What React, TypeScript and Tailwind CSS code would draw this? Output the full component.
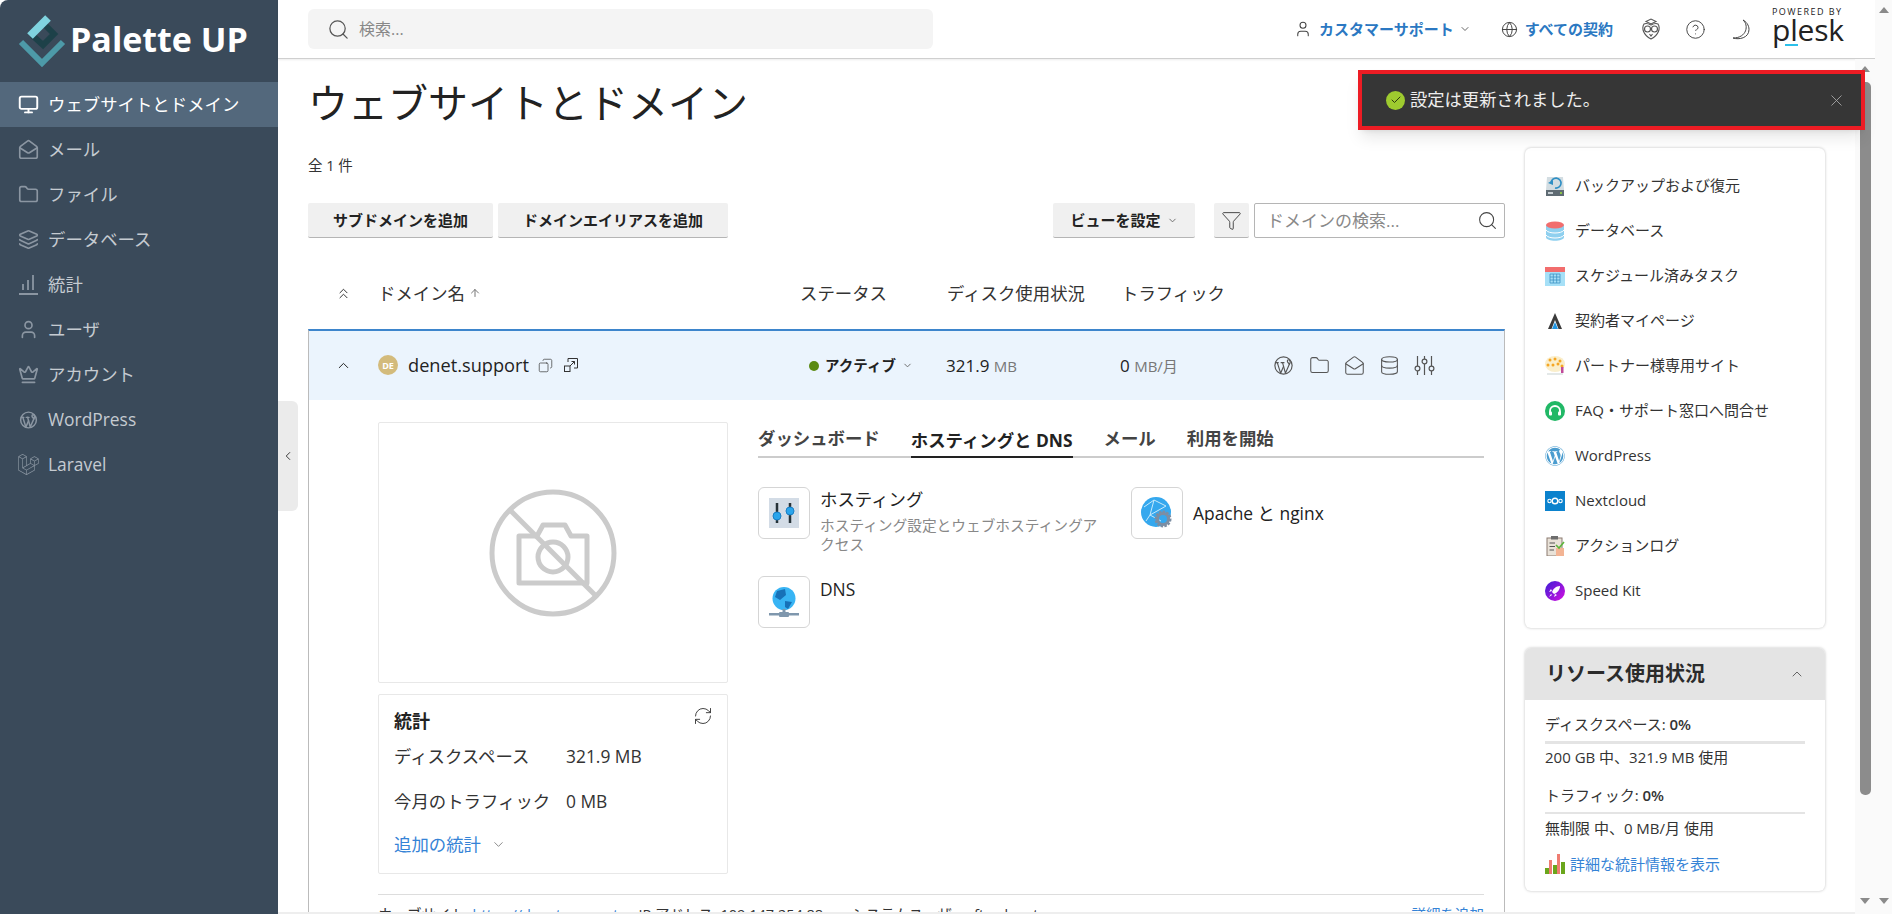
import { ReactNode } from 'react';
import {
  Monitor, MailOpen, Folder, Layers, User, Crown, ChevronLeft, ChevronDown, ChevronUp,
  ChevronsUp, Search, Globe, CircleHelp, Check, X, ArrowUp, Copy, Database,
  RefreshCw, Funnel,
} from 'lucide-react';
import { FaWordpress, FaLaravel } from 'react-icons/fa';
import { TbBrandWordpress } from 'react-icons/tb';

const ChartNav = () => (
  <svg width="21" height="21" viewBox="0 0 21 21" fill="none" stroke="currentColor" strokeWidth="1.8">
    <path d="M1 20 H20 M5 16 V10 M10 16 V6 M15 16 V1" />
  </svg>
);

const navItems = [
  { label: 'ウェブサイトとドメイン', icon: <Monitor size={23} strokeWidth={2.2} />, active: true },
  { label: 'メール', icon: <MailOpen size={23} strokeWidth={1.9} /> },
  { label: 'ファイル', icon: <Folder size={23} strokeWidth={1.9} /> },
  { label: 'データベース', icon: <Layers size={23} strokeWidth={1.9} /> },
  { label: '統計', icon: <ChartNav /> },
  { label: 'ユーザ', icon: <User size={23} strokeWidth={1.9} /> },
  { label: 'アカウント', icon: <Crown size={23} strokeWidth={1.9} /> },
  { label: 'WordPress', icon: <TbBrandWordpress size={24} strokeWidth={1.7} /> },
  { label: 'Laravel', icon: <FaLaravel size={21} /> },
];

const Logo = () => (
  <svg width="50" height="56" viewBox="0 0 50 56" className="shrink-0">
    <path d="M3 31 L24 52 L45 31" fill="none" stroke="#4d9aa8" strokeWidth="6" />
    <path d="M24 11 L36 23 L25 34 L14 24" fill="none" stroke="#1d4149" strokeWidth="6" />
    <path d="M12 25 L30 7" stroke="#7fd3df" strokeWidth="8" />
  </svg>
);

const Sidebar = () => (
  <aside className="w-[278px] shrink-0 bg-[#3a4a5a] rounded-tl-lg">
    <div className="h-[82px] flex items-center pl-[18px] pb-1">
      <Logo />
      <span className="ml-[2px] text-[34px] font-bold text-white">Palette UP</span>
    </div>
    {navItems.map(item => (
      <div
        key={item.label}
        className={`h-[45px] flex items-center pl-[18px] gap-[9px] text-[17.4px] ${
          item.active ? 'bg-[#53687c] text-white' : 'text-[#c5cbd1]'
        }`}
      >
        <span className={`w-[21px] flex justify-center ${item.active ? 'text-white' : 'text-[#8b96a2]'}`}>{item.icon}</span>
        <span>{item.label}</span>
      </div>
    ))}
  </aside>
);

const OwlIcon = () => (
  <svg width="20" height="22" viewBox="0 0 20 22" fill="none" stroke="#555" strokeWidth="1.1">
    <path d="M5 3.5 L10 1 L15 3.5 L10 6 Z" />
    <path d="M3 6 C5 5 8 6 10 7 C12 6 15 5 17 6 C19.5 10 18 17 10 21 C2 17 0.5 10 3 6 Z" />
    <circle cx="6.5" cy="11" r="3" />
    <circle cx="13.5" cy="11" r="3" />
    <path d="M8.5 16 L10 18 L11.5 16" />
  </svg>
);

const Crescent = () => (
  <svg width="18" height="21" viewBox="0 0 18 21" fill="none" stroke="#444" strokeWidth="1">
    <path d="M11 1 C17 6 15 19 1 19 C7 21 17 19 17 10.5 C17 6 14 2.5 11 1 Z" />
  </svg>
);

const TopBar = () => (
  <header className="h-[59px] shrink-0 flex items-center border-b border-[#cfcfcf] shadow-[0_1px_2px_rgba(0,0,0,0.08)] bg-white pl-[30px] pr-[31px]">
    <div className="w-[625px] h-[40px] bg-[#f4f4f4] rounded-md flex items-center pl-[19px] gap-[9px] text-[16px] text-[#888]">
      <Search size={23} strokeWidth={1.3} className="text-[#555]" />
      検索...
    </div>
    <div className="flex-1" />
    <div className="flex items-center text-[15px] font-bold text-[#2b78c2]">
      <User size={18} strokeWidth={1.4} className="text-[#444] mr-[7px]" />
      カスタマーサポート
      <ChevronDown size={12} className="text-[#666] ml-[5px]" />
      <Globe size={17} strokeWidth={1.4} className="text-[#444] ml-[30px] mr-[7px]" />
      すべての契約
    </div>
    <span className="ml-[28px] flex"><OwlIcon /></span>
    <CircleHelp size={21} strokeWidth={1.1} className="text-[#444] ml-[24px]" />
    <span className="ml-[26px] flex"><Crescent /></span>
    <div className="ml-[22px] w-[72px] flex flex-col items-start text-[#222] leading-none mb-[6px]">
      <span className="text-[9px] leading-[10px] tracking-[1.45px] whitespace-nowrap">POWERED BY</span>
      <span className="text-[30px] leading-[26px] tracking-[-0.2px] font-normal">plesk</span>
      <span className="w-[13px] h-[2px] bg-[#2cc0ea] ml-[13px] mt-[1px]" />
    </div>
  </header>
);

const Btn = ({ children, className = '' }: { children: ReactNode; className?: string }) => (
  <div className={`h-[35px] bg-[#f0f0f0] rounded-[2px] border-b border-[#b5b5b5] flex items-center justify-center text-[15px] font-bold text-[#222] whitespace-nowrap ${className}`}>
    {children}
  </div>
);

const Toolbar = () => (
  <div className="flex items-center mt-[27px]">
    <Btn className="w-[185px]">サブドメインを追加</Btn>
    <Btn className="w-[230px] ml-[5px]">ドメインエイリアスを追加</Btn>
    <div className="flex-1" />
    <Btn className="w-[142px] gap-[6px]">
      ビューを設定 <ChevronDown size={11} className="text-[#666]" />
    </Btn>
    <Btn className="w-[35px] ml-[19px]"><Funnel size={21} strokeWidth={1.1} className="text-[#444]" /></Btn>
    <div className="w-[251px] h-[35px] ml-[5px] border border-[#b5b5b5] rounded-[2px] flex items-center justify-between pl-[12px] pr-[6px] text-[17px] text-[#888]">
      ドメインの検索...
      <Search size={21} strokeWidth={1.2} className="text-[#444]" />
    </div>
  </div>
);

const TableHead = () => (
  <div className="flex items-center h-[48px] mt-[31px] mb-[12px] text-[17.4px] text-[#333]">
    <span className="w-[70px] flex justify-center"><ChevronsUp size={17} strokeWidth={1.4} /></span>
    <span className="w-[422px] flex items-center gap-[4px]">ドメイン名 <ArrowUp size={12} className="text-[#777]" /></span>
    <span className="w-[147px]">ステータス</span>
    <span className="w-[174px]">ディスク使用状況</span>
    <span>トラフィック</span>
  </div>
);

const SliderKnobs = () => (
  <svg width="21" height="21" viewBox="0 0 21 21" fill="none" stroke="#555" strokeWidth="1.2">
    <path d="M3.5 1 V11 M3.5 16 V20 M10.5 1 V4 M10.5 9 V20 M17.5 1 V11 M17.5 16 V20" />
    <circle cx="3.5" cy="13.5" r="2.4" />
    <circle cx="10.5" cy="6.5" r="2.4" />
    <circle cx="17.5" cy="13.5" r="2.4" />
  </svg>
);

const OpenLinkBox = () => (
  <svg width="16" height="16" viewBox="0 0 16 16" fill="none" stroke="#333" strokeWidth="1" className="ml-[10px]">
    <path d="M5 5 V1.5 H14.5 V11 H11" />
    <rect x="1.5" y="9" width="5.5" height="5.5" />
    <path d="M7 9 L11.5 4.5 M8.5 4.5 H11.5 V7.5" />
  </svg>
);

const DomainRow = () => (
  <div className="flex items-center h-[69px] bg-[#ebf4fd] text-[#222]">
    <span className="w-[70px] flex justify-center -ml-px"><ChevronUp size={17} strokeWidth={1.4} /></span>
    <span className="w-[421px] flex items-center">
      <span className="w-[20px] h-[20px] rounded-full bg-[#d3bb7c] text-white text-[9px] font-bold flex items-center justify-center">DE</span>
      <span className="ml-[10px] text-[18.2px] font-medium">denet.support</span>
      <Copy size={15} strokeWidth={1.1} className="ml-[9px] text-[#333] -scale-x-100" />
      <OpenLinkBox />
    </span>
    <span className="w-[147px] flex items-center pl-[10px] text-[14.5px] font-bold">
      <span className="w-[10px] h-[10px] rounded-full bg-[#5a8a12] mr-[6px]" />
      アクティブ
      <ChevronDown size={11} className="ml-[6px] text-[#666]" />
    </span>
    <span className="w-[174px] text-[17px]">321.9 <span className="text-[15px] text-[#777]">MB</span></span>
    <span className="w-[152px] text-[17px]">0 <span className="text-[15px] text-[#777]">MB/月</span></span>
    <span className="flex items-center gap-[14px] text-[#555]">
      <TbBrandWordpress size={23} strokeWidth={1.2} />
      <Folder size={21} strokeWidth={1.2} />
      <MailOpen size={21} strokeWidth={1.2} />
      <Database size={21} strokeWidth={1.2} />
      <SliderKnobs />
    </span>
  </div>
);

const NoPhoto = () => (
  <svg width="128" height="128" viewBox="0 0 128 128" fill="none" stroke="#cbcbcb" strokeWidth="5" strokeLinejoin="round">
    <circle cx="64" cy="64" r="61" />
    <path d="M21 21 L107 107" />
    <path d="M30 47 L48 47 L54 36 L76 36 L82 47 L98 47 L98 94 L30 94 Z" />
    <circle cx="64" cy="68" r="15" />
  </svg>
);

const HostingIcon = () => (
  <svg width="30" height="30" viewBox="0 0 30 30">
    <rect width="30" height="30" fill="#d3dce6" />
    <path d="M8 5 V25 M21 5 V25" stroke="#263238" strokeWidth="2.5" />
    <circle cx="8" cy="18" r="4" fill="#2aa5ec" stroke="#1a7fc5" />
    <circle cx="21" cy="13" r="4" fill="#2aa5ec" stroke="#1a7fc5" />
  </svg>
);

const ApacheIcon = () => (
  <svg width="32" height="32" viewBox="0 0 32 32">
    <circle cx="15" cy="15" r="15" fill="#35a8ee" />
    <path d="M3 10 L13 3 L25 9 L9 18 L5 24 M13 3 L9 18 L20 24" stroke="#c7e9fb" strokeWidth="1" fill="none" />
    <circle cx="22" cy="22" r="7" fill="none" stroke="#7c8ea3" strokeWidth="3" strokeDasharray="2.4 1.2" />
    <circle cx="22" cy="22" r="5.5" fill="none" stroke="#7c8ea3" strokeWidth="3" />
  </svg>
);

const DnsIcon = () => (
  <svg width="30" height="30" viewBox="0 0 30 30">
    <circle cx="15" cy="11.5" r="11.5" fill="#38b4f4" />
    <path d="M8 4 L16 2 L17 8 L11 13 L6 10 Z M16 14 L23 15 L19 22 L16 20 Z" fill="#1771b8" />
    <rect x="13.5" y="22" width="3" height="4" fill="#7f97ad" />
    <rect x="0" y="26" width="30" height="2.5" fill="#7f97ad" />
    <rect x="10" y="25" width="10" height="5" rx="1" fill="#7f97ad" />
  </svg>
);

const ToolTile = ({ icon }: { icon: ReactNode }) => (
  <div className="w-[52px] h-[52px] shrink-0 border border-[#d5d5d5] rounded-md flex items-center justify-center">{icon}</div>
);

const HostingPanel = () => (
  <div className="flex-1">
    <div className="flex items-end h-[36px] border-b-2 border-[#cccccc] text-[17.4px] font-bold text-[#444] gap-[31px]">
      <span className="h-[35px] leading-[35px]">ダッシュボード</span>
      <span className="h-[35px] leading-[35px] border-b-2 border-[#222] text-[#222] -mb-[2px]">ホスティングと DNS</span>
      <span className="h-[35px] leading-[35px]">メール</span>
      <span className="h-[35px] leading-[35px]">利用を開始</span>
    </div>
    <div className="grid grid-cols-[373px_1fr] mt-[29px] text-[#222]">
      <div className="flex gap-[10px] h-[89px]">
        <ToolTile icon={<HostingIcon />} />
        <div className="w-[285px]">
          <div className="text-[17.4px] leading-[24px]">ホスティング</div>
          <div className="text-[14.7px] leading-[19px] text-[#888] mt-[5px]">ホスティング設定とウェブホスティングアクセス</div>
        </div>
      </div>
      <div className="flex gap-[10px] h-[52px] items-center">
        <ToolTile icon={<ApacheIcon />} />
        <span className="text-[17.4px]">Apache と nginx</span>
      </div>
      <div className="flex gap-[10px] h-[52px]">
        <ToolTile icon={<DnsIcon />} />
        <span className="text-[17.4px] leading-[26px]">DNS</span>
      </div>
    </div>
  </div>
);

const StatsCard = () => (
  <div className="w-[350px] h-[180px] mt-[11px] border border-[#e8e8e8] rounded-[2px] px-[15px] pt-[13px] text-[17.4px] text-[#333]">
    <div className="flex justify-between items-start h-[30px]">
      <span className="text-[18px] font-bold text-[#222]">統計</span>
      <RefreshCw size={20} strokeWidth={1.1} className="-mt-[2px] -mr-[1px]" />
    </div>
    <div className="flex h-[45px] items-center -mt-[4px]"><span className="w-[172px]">ディスクスペース</span>321.9 MB</div>
    <div className="flex h-[45px] items-center"><span className="w-[172px]">今月のトラフィック</span>0 MB</div>
    <div className="flex items-center h-[40px] text-[#3583d6]">
      追加の統計 <ChevronDown size={15} strokeWidth={1.2} className="ml-[10px] text-[#666]" />
    </div>
  </div>
);

const DomainBody = () => (
  <div className="pl-[69px] pr-[20px] pt-[22px]">
    <div className="flex gap-[30px]">
      <div className="w-[350px] shrink-0">
        <div className="h-[261px] border border-[#e8e8e8] rounded-[2px] flex items-center justify-center">
          <NoPhoto />
        </div>
        <StatsCard />
      </div>
      <HostingPanel />
    </div>
    <div className="border-t border-[#dddddd] mt-[20px] pt-[9px] flex text-[14.5px] text-[#333] whitespace-nowrap">
      <span>ウェブサイト: <span className="text-[#3583d6]">https://denet.support</span></span>
      <span className="ml-[20px]">IP アドレス: 109.147.254.88</span>
      <span className="ml-[28px]">システムユーザー: ftp_denet</span>
      <span className="ml-auto text-[#3583d6]">詳細を追加</span>
    </div>
  </div>
);

const BackupIcon = () => (
  <svg width="20" height="20" viewBox="0 0 20 20">
    <path d="M2 1 H18 L19 14 H1 Z" fill="#d3dde2" />
    <rect x="1" y="14" width="18" height="6" fill="#5f6b73" />
    <rect x="3" y="16" width="5" height="2" fill="#c5cdd2" />
    <rect x="15" y="16" width="2" height="2" fill="#8bc34a" />
    <path d="M6 7 A5 5 0 1 1 10 12" fill="none" stroke="#2f8fc4" strokeWidth="1.6" />
    <path d="M3 7 L8 4 L8 9 Z" fill="#2f8fc4" />
  </svg>
);

const DbIcon = () => (
  <svg width="20" height="20" viewBox="0 0 20 20">
    <path d="M1 4 V16 C1 21 19 21 19 16 V4 Z" fill="#8fd0ef" />
    <ellipse cx="10" cy="4" rx="9" ry="3.5" fill="#f26d6d" />
    <path d="M1 9 C3 13 17 13 19 9 M1 14 C3 18 17 18 19 14" stroke="#fff" fill="none" />
  </svg>
);

const CalendarIcon = () => (
  <svg width="20" height="20" viewBox="0 0 20 20">
    <rect y="1" width="20" height="19" fill="#a6e0f7" />
    <rect y="1" width="20" height="5" fill="#f26d6d" />
    <path d="M5 8 H15 V17 H5 Z M8.3 8 V17 M11.7 8 V17 M5 11 H15 M5 14 H15" stroke="#3d93c4" fill="none" strokeWidth="0.8" />
  </svg>
);

const MyPageIcon = () => (
  <svg width="20" height="20" viewBox="0 0 20 20">
    <path d="M10 2 L17 18 H13.5 L10 9 L6.5 18 H3 Z" fill="#3b3b3b" />
    <path d="M10 11 L13 18 H7 Z" fill="#2196e3" />
  </svg>
);

const PartnerIcon = () => (
  <svg width="20" height="20" viewBox="0 0 20 20">
    <ellipse cx="10" cy="8" rx="10" ry="8" fill="#faeecb" />
    {[[5, 4], [10, 3], [15, 5], [3, 9], [8, 9], [13, 8], [17, 10]].map(([x, y]) => (
      <circle key={`${x}-${y}`} cx={x} cy={y} r="1.5" fill="#f5a623" />
    ))}
    <rect x="2" y="17" width="16" height="2" fill="#e3e8e8" />
    <rect x="16" y="11" width="2.5" height="6" fill="#c04a9a" />
  </svg>
);

const FaqIcon = () => (
  <svg width="20" height="20" viewBox="0 0 20 20" fill="none">
    <circle cx="10" cy="10" r="10" fill="#21b866" />
    <path d="M5 12 V10 A5 5 0 0 1 15 10 V12" stroke="#fff" strokeWidth="1.8" />
    <rect x="4" y="10.5" width="3" height="4" rx="1" fill="#fff" />
    <rect x="13" y="10.5" width="3" height="4" rx="1" fill="#fff" />
  </svg>
);

const NextcloudIcon = () => (
  <svg width="20" height="20" viewBox="0 0 20 20" fill="none">
    <rect width="20" height="20" fill="#0b82cd" />
    <circle cx="10" cy="10" r="2.8" stroke="#fff" strokeWidth="1.4" />
    <circle cx="4.5" cy="10" r="1.7" stroke="#fff" strokeWidth="1.1" />
    <circle cx="15.5" cy="10" r="1.7" stroke="#fff" strokeWidth="1.1" />
  </svg>
);

const LogIcon = () => (
  <svg width="20" height="20" viewBox="0 0 20 20">
    <rect x="2" y="2" width="15" height="18" fill="#e9e2d8" stroke="#8b7b70" />
    <rect x="6" y="0" width="7" height="3.5" fill="#6d6d6d" />
    <path d="M4.5 7 H10 M4.5 10.5 H10 M4.5 14 H9" stroke="#555" />
    <path d="M11 12 H19 V20 H11 Z" fill="#f3b494" />
    <path d="M11 9 L14 12 L19 6" stroke="#5db53c" strokeWidth="1.6" fill="none" />
  </svg>
);

const RocketIcon = () => (
  <svg width="20" height="20" viewBox="0 0 20 20">
    <defs>
      <linearGradient id="sk" x1="0" y1="0" x2="1" y2="1">
        <stop offset="0" stopColor="#3b1fd6" />
        <stop offset="1" stopColor="#d60ee0" />
      </linearGradient>
    </defs>
    <circle cx="10" cy="10" r="10" fill="url(#sk)" />
    <path d="M15 5 C11 5 8 8 7 11 L9 13 C12 12 15 9 15 5 Z" fill="#fff" />
    <path d="M7 10 L4 11 L6 8 Z M10 13 L9 16 L12 14 Z M6 13 L4 16 L7 14 Z" fill="#fff" />
  </svg>
);

const links = [
  { label: 'バックアップおよび復元', icon: <BackupIcon /> },
  { label: 'データベース', icon: <DbIcon /> },
  { label: 'スケジュール済みタスク', icon: <CalendarIcon /> },
  { label: '契約者マイページ', icon: <MyPageIcon /> },
  { label: 'パートナー様専用サイト', icon: <PartnerIcon /> },
  { label: 'FAQ・サポート窓口へ問合せ', icon: <FaqIcon /> },
  { label: 'WordPress', icon: <FaWordpress size={20} className="text-[#4a9ccf]" /> },
  { label: 'Nextcloud', icon: <NextcloudIcon /> },
  { label: 'アクションログ', icon: <LogIcon /> },
  { label: 'Speed Kit', icon: <RocketIcon /> },
];

const RightColumn = () => (
  <div className="w-[300px] shrink-0 pt-[89px] ml-[20px]">
    <div className="h-[480px] bg-white rounded-md shadow-[0_0_3px_rgba(0,0,0,0.25)] pl-[20px] pt-[15px]">
      {links.map(l => (
        <div key={l.label} className="h-[45px] flex items-center gap-[10px] text-[15px] text-[#333]">
          <span className="w-[20px] flex justify-center shrink-0">{l.icon}</span>
          {l.label}
        </div>
      ))}
    </div>
    <div className="h-[243px] mt-[20px] bg-white rounded-md shadow-[0_0_3px_rgba(0,0,0,0.25)] overflow-hidden">
      <div className="h-[52px] bg-[#e4e4e4] flex items-center justify-between pl-[21px] pr-[20px] text-[20px] font-bold text-[#2b2b2b]">
        リソース使用状況
        <ChevronUp size={16} strokeWidth={1.2} className="text-[#444]" />
      </div>
      <div className="px-[20px] pt-[14px] text-[15px] text-[#333]">
        <div className="h-[20px] leading-[20px]">ディスクスペース: <span className="font-semibold">0%</span></div>
        <div className="h-[3px] bg-[#e4e4e4] mt-[7px]" />
        <div className="h-[20px] leading-[20px] mt-[3px]">200 GB 中、321.9 MB 使用</div>
        <div className="h-[20px] leading-[20px] mt-[18px]">トラフィック: <span className="font-semibold">0%</span></div>
        <div className="h-[2px] bg-[#e4e4e4] mt-[7px]" />
        <div className="h-[20px] leading-[20px] mt-[4px]">無制限 中、0 MB/月 使用</div>
        <div className="flex items-center h-[20px] gap-[5px] mt-[16px] text-[#3583d6]">
          <svg width="20" height="20" viewBox="0 0 20 20" className="shrink-0">
            <rect x="0" y="14" width="4" height="6" fill="#6aa61c" />
            <rect x="4" y="6" width="3" height="14" fill="#ef7d72" />
            <rect x="8" y="11" width="4" height="9" fill="#6aa61c" />
            <rect x="12" y="0" width="3" height="20" fill="#ef7d72" />
            <rect x="16" y="8" width="4" height="12" fill="#6aa61c" />
          </svg>
          詳細な統計情報を表示
        </div>
      </div>
    </div>
  </div>
);

const ArrowUpTri = () => (
  <div className="w-0 h-0 border-x-[5px] border-x-transparent border-b-[6px] border-b-[#8a8a8a]" />
);
const ArrowDownTri = () => (
  <div className="w-0 h-0 border-x-[5px] border-x-transparent border-t-[6px] border-t-[#8a8a8a]" />
);

const Toast = () => (
  <div className="absolute left-[1358px] top-[70px] w-[507px] h-[60px] border-[4px] border-[#ed1c24] bg-[#363636] shadow-lg flex items-center pl-[24px] pr-[15px] text-[17.3px] text-[#eeeeee]">
    <span className="w-[19px] h-[19px] rounded-full bg-[#9ecb2f] flex items-center justify-center mr-[5px]">
      <Check size={12} strokeWidth={2} className="text-[#2d3a10]" />
    </span>
    設定は更新されました。
    <X size={19} strokeWidth={1.1} className="ml-auto text-[#aaaaaa]" />
  </div>
);

export default function App() {
  return (
    <div className="relative w-[1892px] h-[914px] flex overflow-hidden bg-white text-[#222] font-['Open_Sans','Noto_Sans_CJK_JP',sans-serif]">
      <Sidebar />
      <div className="w-[1597px] flex flex-col">
        <TopBar />
        <div className="flex-1 min-h-0 flex">
          <main className="relative w-[1577px] flex overflow-hidden pl-[30px] border-b-2 border-[#eeeeee]">
            <div className="absolute left-0 top-[342px] w-[20px] h-[110px] bg-[#ebebeb] rounded-r-md flex items-center justify-center">
              <ChevronLeft size={14} strokeWidth={1.5} />
            </div>
            <div className="w-[1197px] shrink-0">
              <h1 className="text-[40px] leading-[50px] pt-[19px] box-content font-normal text-[#222]">ウェブサイトとドメイン</h1>
              <div className="text-[14.5px] leading-[20px] mt-[28px] text-[#333]">全 1 件</div>
              <Toolbar />
              <TableHead />
              <div className="border-x border-[#bbbbbb] border-t-2 border-t-[#3d85cc]">
                <DomainRow />
                <DomainBody />
              </div>
            </div>
            <RightColumn />
          </main>
          <div className="w-[20px] shrink-0 bg-[#fafafa] flex flex-col items-center pt-[7px] pb-[10px]">
            <ArrowUpTri />
            <div className="w-[11px] h-[713px] bg-[#8c8c8c] rounded-[5px] mt-[10px]" />
            <div className="flex-1" />
            <ArrowDownTri />
          </div>
        </div>
      </div>
      <div className="w-[17px] shrink-0 bg-[#fafafa] flex flex-col items-center justify-between pt-[7px] pb-[10px]">
        <ArrowUpTri />
        <ArrowDownTri />
      </div>
      <Toast />
    </div>
  );
}
